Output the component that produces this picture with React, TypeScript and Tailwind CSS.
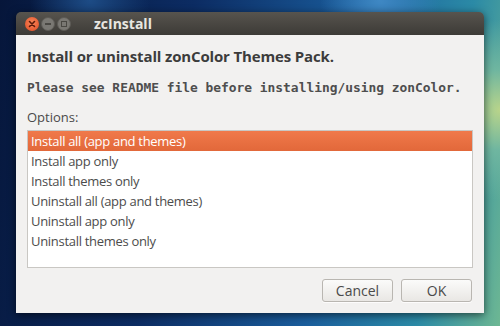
import React from "react";

const items = [
  "Install all (app and themes)",
  "Install app only",
  "Install themes only",
  "Uninstall all (app and themes)",
  "Uninstall app only",
  "Uninstall themes only",
];

export default function App() {
  return (
    <div
      className="relative w-[500px] h-[326px] overflow-hidden pt-[12px] pl-[16px]"
      style={{
        background:
          "radial-gradient(circle at 500px 110px, #b9d48a 0, #6fb6a0 40px, transparent 90px), radial-gradient(circle at 90px 0px, #1d4c86 0, transparent 60px), radial-gradient(circle at 380px 0px, #3f88c4 0, transparent 60px), linear-gradient(100deg, #06163a 0%, #0c2c63 35%, #1a5d9c 65%, #2b8aa6 85%, #6db793 100%)",
      }}
    >
      <div className="relative w-[468px] h-[301px] flex flex-col shadow-[0_2px_8px_rgba(0,0,0,0.6)] rounded-t-[5px]">
        {/* Title bar */}
        <div className="h-[23px] flex items-center rounded-t-[5px] bg-gradient-to-b from-[#57544e] to-[#3d3b37] pl-[9px]">
          <div className="flex items-center gap-[2px]">
            <div className="w-[14px] h-[14px] rounded-full bg-[radial-gradient(circle_at_50%_40%,#f7865a,#df4a22)] flex items-center justify-center">
              <svg width="8" height="8" viewBox="0 0 8 8">
                <path d="M1.5 1.5 L6.5 6.5 M6.5 1.5 L1.5 6.5" stroke="#5a1a0a" strokeWidth="1.6" strokeLinecap="round" />
              </svg>
            </div>
            <div className="w-[14px] h-[14px] rounded-full bg-[#7a7873] border border-[#5c5a55] flex items-center justify-center">
              <div className="w-[6px] h-[2px] bg-[#4a4843]" />
            </div>
            <div className="w-[14px] h-[14px] rounded-full bg-[#7a7873] border border-[#5c5a55] flex items-center justify-center">
              <div className="w-[6px] h-[6px] border border-[#4a4843]" />
            </div>
          </div>
          <span
            className="ml-[23px] text-[14px] font-bold text-[#e8e6e1]"
            style={{ fontFamily: "'Open Sans', 'Noto Sans', sans-serif" }}
          >
            zcInstall
          </span>
        </div>
        {/* Body */}
        <div
          className="flex-1 bg-[#f2f1f0] flex flex-col px-[11px]"
          style={{ fontFamily: "'Open Sans', 'Noto Sans', sans-serif" }}
        >
          <div className="mt-[11px] h-[20px] leading-[20px] text-[15px] font-bold text-[#3c3c3c] tracking-[-0.15px]">
            Install or uninstall zonColor Themes Pack.
          </div>
          <div
            className="mt-[13px] h-[18px] leading-[18px] text-[12.9px] font-bold text-[#4e4e4e]"
            style={{ fontFamily: "'DejaVu Sans Mono', 'Liberation Mono', monospace" }}
          >
            Please see README file before installing/using zonColor.
          </div>
          <div className="mt-[12px] h-[16px] leading-[16px] text-[13px] text-[#4a4a4a]">
            Options:
          </div>
          <div className="mt-[5px] h-[138px] bg-white border border-[#c9c7c3] flex flex-col">
            {items.map((t, i) => (
              <div
                key={t}
                className={
                  i === 0
                    ? "h-[20px] leading-[20px] pl-[3px] text-[13px] tracking-[-0.3px] text-white bg-gradient-to-b from-[#f0794a] to-[#e2683a]"
                    : "h-[20px] leading-[20px] pl-[3px] text-[13px] tracking-[-0.3px] text-[#4c4c4c]"
                }
              >
                {t}
              </div>
            ))}
          </div>
          <div className="mt-[11px] flex justify-end gap-[8px] pr-[1px]">
            <button className="w-[71px] h-[23px] rounded-[3px] border border-[#b9b6b1] bg-gradient-to-b from-[#fbfbfa] to-[#e9e7e4] text-[14px] text-[#4a4a4a] shadow-[0_1px_0_rgba(255,255,255,0.8)]">
              Cancel
            </button>
            <button className="w-[71px] h-[23px] rounded-[3px] border border-[#b9b6b1] bg-gradient-to-b from-[#fbfbfa] to-[#e9e7e4] text-[14px] text-[#4a4a4a] shadow-[0_1px_0_rgba(255,255,255,0.8)]">
              OK
            </button>
          </div>
        </div>
      </div>
    </div>
  );
}
